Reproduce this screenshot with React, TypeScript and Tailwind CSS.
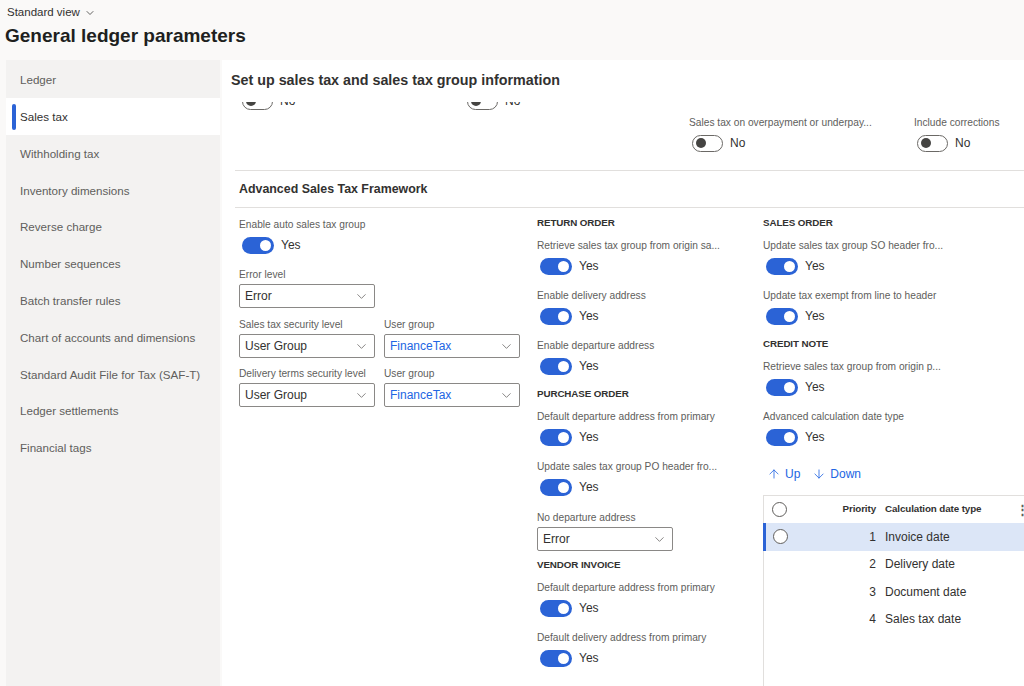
import React from "react";
import { ChevronDown, ArrowUp, ArrowDown } from "lucide-react";

function Toggle({ on }: { on: boolean }) {
  return on ? (
    <div className="w-[32px] h-[17px] rounded-full bg-[#2b63d6] flex items-center justify-end pr-[3px] shrink-0">
      <div className="w-[11px] h-[11px] rounded-full bg-white" />
    </div>
  ) : (
    <div className="w-[31px] h-[17px] rounded-full border border-[#6b6966] bg-white flex items-center pl-[3px] shrink-0">
      <div className="w-[10px] h-[10px] rounded-full bg-[#454442]" />
    </div>
  );
}

function ToggleField({ label, on, className = "" }: { label: string; on: boolean; className?: string }) {
  return (
    <div className={`flex flex-col ${className}`}>
      <div className="h-[14px] leading-[14px] text-[10.2px] text-[#605e5c] whitespace-nowrap">{label}</div>
      <div className="mt-[3px] h-[20px] flex items-center pl-[3px] gap-[7px]">
        <Toggle on={on} />
        <span className="text-[12px] text-[#323130]">{on ? "Yes" : "No"}</span>
      </div>
    </div>
  );
}

function Select({ value, blue = false }: { value: string; blue?: boolean }) {
  return (
    <div
      className={`w-[136px] h-[24px] border border-[#8a8886] rounded-[2px] flex items-center justify-between pl-[5px] pr-[5px] text-[12px] ${
        blue ? "text-[#2266e3]" : "text-[#323130]"
      }`}
    >
      <span>{value}</span>
      <ChevronDown size={15} strokeWidth={1.2} className="text-[#605e5c]" />
    </div>
  );
}

function SelectField({ label, value, blue = false, className = "" }: { label: string; value: string; blue?: boolean; className?: string }) {
  return (
    <div className={`flex flex-col ${className}`}>
      <div className="h-[14px] leading-[14px] text-[10.2px] text-[#605e5c] whitespace-nowrap">{label}</div>
      <div className="mt-[2px]">
        <Select value={value} blue={blue} />
      </div>
    </div>
  );
}

function Header({ text, className = "" }: { text: string; className?: string }) {
  return (
    <div className={`h-[14px] leading-[14px] text-[9.8px] font-bold tracking-[-0.1px] text-[#323130] ${className}`}>{text}</div>
  );
}

function Radio() {
  return <div className="w-[15px] h-[15px] rounded-full border border-[#605e5c] bg-white" />;
}

const navItems = [
  "Ledger",
  "Sales tax",
  "Withholding tax",
  "Inventory dimensions",
  "Reverse charge",
  "Number sequences",
  "Batch transfer rules",
  "Chart of accounts and dimensions",
  "Standard Audit File for Tax (SAF-T)",
  "Ledger settlements",
  "Financial tags",
];

const rows = [
  { p: 1, t: "Invoice date" },
  { p: 2, t: "Delivery date" },
  { p: 3, t: "Document date" },
  { p: 4, t: "Sales tax date" },
];

export default function App() {
  return (
    <div className="w-[1024px] h-[686px] overflow-hidden bg-[#faf9f8] flex flex-col font-['Liberation_Sans',Arial,sans-serif] text-[#323130]">
      {/* page header */}
      <div className="h-[60px] shrink-0 pl-[7px] pt-[5px]">
        <div className="h-[16px] flex items-center gap-[4px] text-[11.5px] text-[#323130]">
          <span>Standard view</span>
          <ChevronDown size={12} strokeWidth={1.5} />
        </div>
        <div className="mt-[2px] -ml-[2px] h-[26px] leading-[26px] text-[19px] font-semibold text-[#201f1e]">
          General ledger parameters
        </div>
      </div>

      {/* body */}
      <div className="flex flex-1 min-h-0">
        {/* sidebar */}
        <div className="ml-[6px] w-[214px] bg-[#f3f2f1] flex flex-col pt-[1.5px]">
          {navItems.map((n, i) =>
            i === 1 ? (
              <div key={n} className="h-[36.8px] bg-white flex items-center pl-[6px] text-[11.6px] text-[#323130]">
                <div className="w-[3.5px] h-[26px] rounded-full bg-[#2b63d6] mr-[4.5px]" />
                {n}
              </div>
            ) : (
              <div key={n} className="h-[36.8px] flex items-center pl-[14px] text-[11.6px] text-[#605e5c]">
                {n}
              </div>
            )
          )}
        </div>

        {/* content */}
        <div className="ml-[2px] flex-1 bg-white flex flex-col min-w-0">
          <div className="h-[42px] shrink-0 pt-[12px] pl-[9px] leading-[16px] text-[14.3px] font-semibold text-[#323130] whitespace-nowrap">
            Set up sales tax and sales tax group information
          </div>

          <div className="flex-1 min-h-0 overflow-hidden">
            <div className="-mt-[28px]">
              <div className="grid grid-cols-[225px_225px_225px_225px] pl-[17px]">
                <ToggleField label="" on={false} />
                <ToggleField label="" on={false} />
                <div />
                <div />
              </div>
              <div className="mt-[5px] grid grid-cols-[225px_225px_225px_227px] pl-[17px]">
                <div />
                <div />
                <ToggleField label="Sales tax on overpayment or underpay..." on={false} />
                <ToggleField label="Include corrections" on={false} />
              </div>

              <div className="mt-[17px] ml-[13px] border-t border-b border-[#e1dfdd] h-[38px] flex items-center pl-[4px] text-[12.4px] font-semibold text-[#323130]">
                Advanced Sales Tax Framework
              </div>

              <div className="grid grid-cols-[298px_226px_1fr] pl-[17px]">
                {/* left column */}
                <div className="flex flex-col">
                  <ToggleField label="Enable auto sales tax group" on className="mt-[10px]" />
                  <SelectField label="Error level" value="Error" className="mt-[13px]" />
                  <div className="flex gap-[9px] mt-[10px]">
                    <SelectField label="Sales tax security level" value="User Group" />
                    <SelectField label="User group" value="FinanceTax" blue />
                  </div>
                  <div className="flex gap-[9px] mt-[9px]">
                    <SelectField label="Delivery terms security level" value="User Group" />
                    <SelectField label="User group" value="FinanceTax" blue />
                  </div>
                </div>

                {/* middle column */}
                <div className="flex flex-col">
                  <Header text="RETURN ORDER" className="mt-[8px]" />
                  <ToggleField label="Retrieve sales tax group from origin sa..." on className="mt-[9px]" />
                  <ToggleField label="Enable delivery address" on className="mt-[13px]" />
                  <ToggleField label="Enable departure address" on className="mt-[13px]" />
                  <Header text="PURCHASE ORDER" className="mt-[11px]" />
                  <ToggleField label="Default departure address from primary" on className="mt-[9px]" />
                  <ToggleField label="Update sales tax group PO header fro..." on className="mt-[13px]" />
                  <SelectField label="No departure address" value="Error" className="mt-[14px]" />
                  <Header text="VENDOR INVOICE" className="mt-[7px]" />
                  <ToggleField label="Default departure address from primary" on className="mt-[9px]" />
                  <ToggleField label="Default delivery address from primary" on className="mt-[13px]" />
                </div>

                {/* right column */}
                <div className="flex flex-col">
                  <Header text="SALES ORDER" className="mt-[8px]" />
                  <ToggleField label="Update sales tax group SO header fro..." on className="mt-[9px]" />
                  <ToggleField label="Update tax exempt from line to header" on className="mt-[13px]" />
                  <Header text="CREDIT NOTE" className="mt-[11px]" />
                  <ToggleField label="Retrieve sales tax group from origin p..." on className="mt-[9px]" />
                  <ToggleField label="Advanced calculation date type" on className="mt-[13px]" />

                  <div className="mt-[17px] h-[20px] flex items-center pl-[4px] gap-[12px] text-[12px] text-[#2266e3]">
                    <div className="flex items-center gap-[4px]">
                      <ArrowUp size={14} strokeWidth={1.4} />
                      <span>Up</span>
                    </div>
                    <div className="flex items-center gap-[4px]">
                      <ArrowDown size={14} strokeWidth={1.4} />
                      <span>Down</span>
                    </div>
                  </div>

                  <div className="mt-[11px] w-[290px] border-t border-[#e1dfdd]">
                    <div className="h-[27px] flex items-center border-l border-[#e1dfdd] text-[9.8px] font-bold tracking-[-0.1px] text-[#323130]">
                      <div className="w-[31px] flex justify-center">
                        <Radio />
                      </div>
                      <div className="w-[85px] text-right pr-[4px]">Priority</div>
                      <div className="w-[136px] pl-[5px] whitespace-nowrap">Calculation date type</div>
                      <div className="w-[10px] text-[13px] font-bold text-[#605e5c] leading-none">⋮</div>
                    </div>
                    {rows.map((r, i) =>
                      i === 0 ? (
                        <div key={r.p} className="h-[27.5px] flex items-center border-l-[3px] border-[#2b63d6] bg-[#dce6f7] text-[12px]">
                          <div className="w-[29px] flex justify-center">
                            <Radio />
                          </div>
                          <div className="w-[85px] text-right pr-[4px]">{r.p}</div>
                          <div className="pl-[5px]">{r.t}</div>
                        </div>
                      ) : (
                        <div key={r.p} className="h-[27.5px] flex items-center border-l border-[#e1dfdd] text-[12px]">
                          <div className="w-[31px]" />
                          <div className="w-[85px] text-right pr-[4px]">{r.p}</div>
                          <div className="pl-[5px]">{r.t}</div>
                        </div>
                      )
                    )}
                    <div className="h-[80px] border-l border-[#e1dfdd]" />
                  </div>
                </div>
              </div>
            </div>
          </div>
        </div>
      </div>
    </div>
  );
}
